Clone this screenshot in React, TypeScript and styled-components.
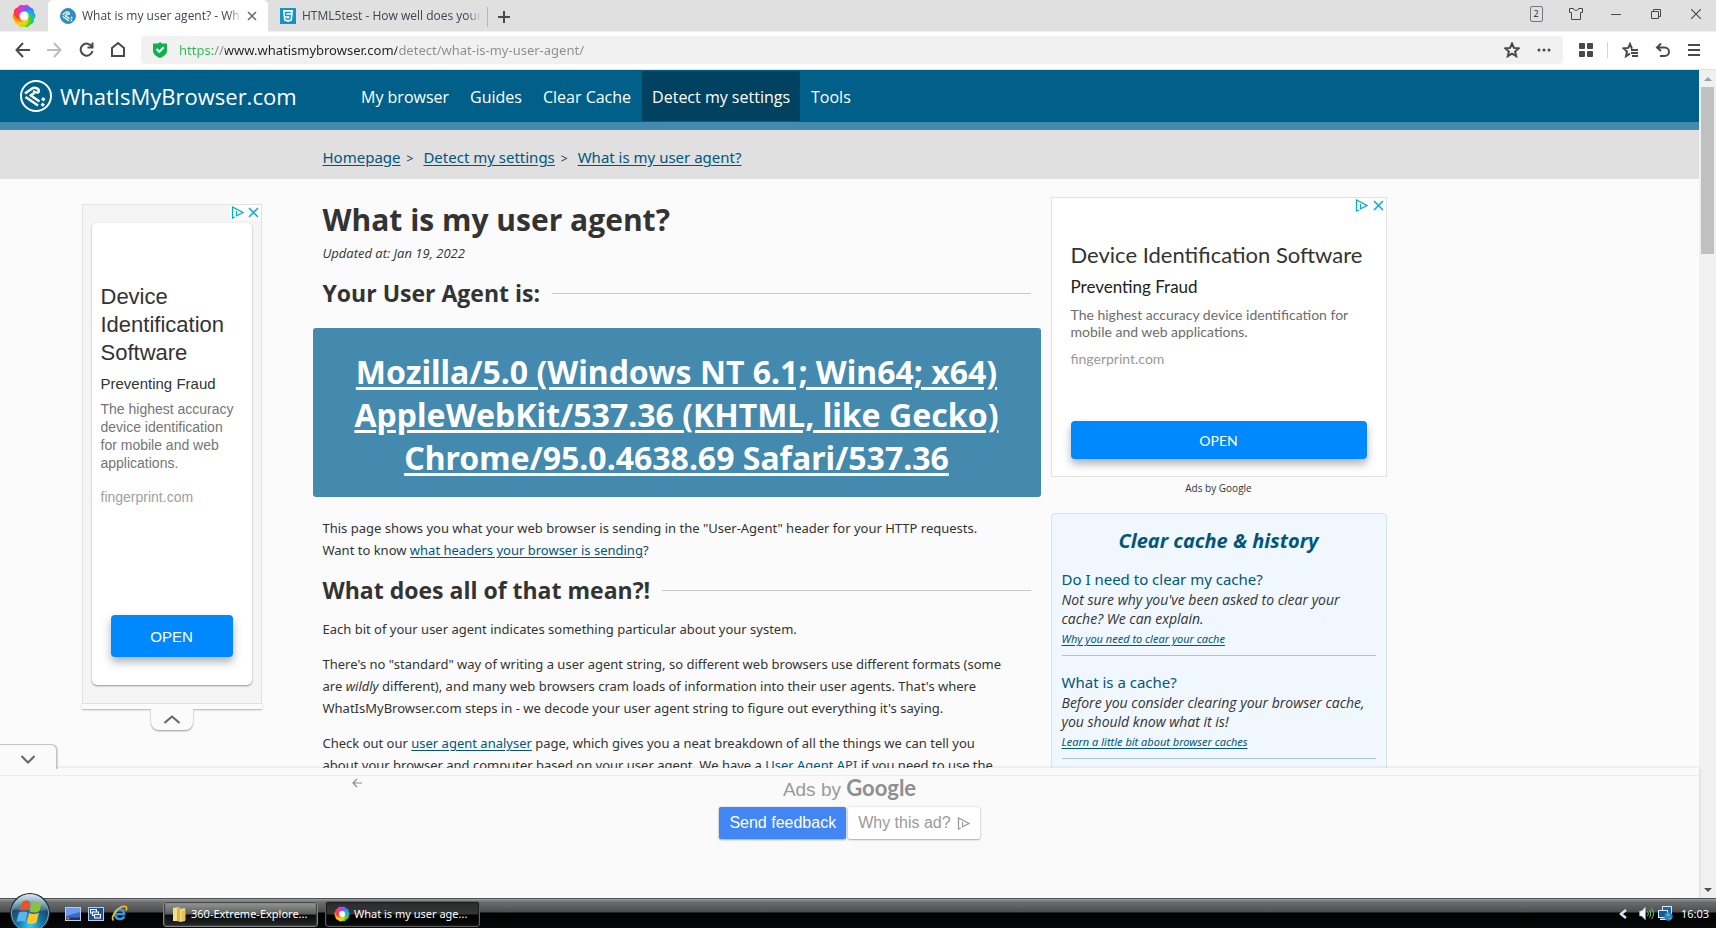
import React from "react";
import styled, { createGlobalStyle, css } from "styled-components";

const GlobalStyle = createGlobalStyle`
  * { box-sizing: border-box; }
  body { margin: 0; background: #fbfbfb; overflow: hidden; }
  button, input { font: inherit; margin: 0; }
  h1, h2, h3, p, ul, ol { margin: 0; padding: 0; }
  ul, ol { list-style: none; }
`;

const segoe = `"Segoe UI", "Open Sans", "Noto Sans", sans-serif`;
const segoeWide = `"Segoe UI", "Noto Sans", "Open Sans", sans-serif`;
const arial = `Arial, "Liberation Sans", sans-serif`;
const google = `"Google Sans", Lato, sans-serif`;

const Desktop = styled.div`
  height: 100vh;
  display: flex;
  flex-direction: column;
  font-family: ${segoe};
  font-size: 13px;
  color: #333;
`;

const IconButton = styled.button<{ $w?: number }>`
  width: ${(p) => p.$w ?? 32}px;
  height: 28px;
  padding: 0;
  border: 0;
  background: none;
  display: flex;
  align-items: center;
  justify-content: center;
  flex: none;
`;

/* ---------- browser chrome ---------- */

const TabStrip = styled.div`
  height: 32px;
  background: #e0e0e0;
  border-bottom: 1px solid #f0f0f0;
  display: flex;
  align-items: stretch;
  flex: none;
`;

const BrowserMark = styled.div`
  width: 48px;
  display: flex;
  align-items: center;
  padding-left: 12px;
`;

const Tab = styled.div<{ $active?: boolean }>`
  width: 220px;
  display: flex;
  align-items: center;
  gap: 6px;
  padding: 0 7px 0 12px;
  background: ${(p) => (p.$active ? "#fff" : "transparent")};
  border-radius: 5px 5px 0 0;
  margin-bottom: -1px;
  svg { flex: none; }
  button { margin-left: -5px; }
`;

const TabTitle = styled.span`
  flex: 1;
  overflow: hidden;
  white-space: nowrap;
  font-size: 12px;
  line-height: 16px;
  color: #3f4456;
  mask-image: linear-gradient(to right, #000 calc(100% - 14px), transparent);
`;

const NewTab = styled.div`
  height: 20px;
  margin: 7px 0 0 -1px;
  border-left: 1px solid #b8b8b8;
  display: flex;
  align-items: center;
`;

const WindowControls = styled.div`
  margin-left: auto;
  display: flex;
  align-items: center;
  height: 28px;
`;

const TabCount = styled.span`
  width: 13px;
  height: 16px;
  border: 1px solid #777;
  border-radius: 2px;
  font-size: 9px;
  line-height: 14px;
  text-align: center;
  color: #222;
`;

const Toolbar = styled.div`
  height: 38px;
  background: #fff;
  border-bottom: 1px solid #e0e0e0;
  display: flex;
  align-items: center;
  padding: 0 6px 2px;
  flex: none;
`;

const AddressBar = styled.label`
  flex: 1;
  height: 28px;
  margin: 0 7px 0 7px;
  border-radius: 4px;
  background: #f1f1f1;
  display: flex;
  align-items: center;
  padding: 0 3px 0 12px;
  svg { flex: none; }
`;

const AddressInput = styled.input`
  flex: 1;
  min-width: 0;
  height: 24px;
  margin-left: 12px;
  padding: 0;
  border: 0;
  outline: 0;
  font-family: ${segoeWide};
  font-size: 13px;
  color: transparent;
  background: linear-gradient(
    to right,
    #2dbb55 34px, #8c8c8c 34px, #8c8c8c 46px,
    #222 46px, #222 218px, #8c8c8c 218px
  );
  background-clip: text;
`;

const ToolbarDivider = styled.span`
  width: 1px;
  height: 16px;
  background: #d4d4d4;
  margin: 0 6px 0 5px;
`;

/* ---------- page ---------- */

const Viewport = styled.div`
  flex: 1;
  min-height: 0;
  display: flex;
`;

const PageColumn = styled.div`
  flex: 1;
  min-width: 0;
  display: flex;
  flex-direction: column;
`;

const Page = styled.div`
  flex: 1;
  min-height: 0;
  overflow: hidden;
  background: #fbfbfb;
`;

const ScrollTrack = styled.div`
  width: 17px;
  background: #f0f0f0;
  display: flex;
  flex-direction: column;
  align-items: center;
  justify-content: space-between;
`;

const ScrollTop = styled.div`
  display: flex;
  flex-direction: column;
  align-items: center;
`;

const ScrollArrow = styled.div`
  height: 17px;
  display: flex;
  align-items: center;
`;

const ScrollThumb = styled.div`
  width: 13px;
  height: 167px;
  background: #c0c0c0;
`;

const SiteHeader = styled.header`
  height: 60px;
  background: #00608a;
  border-bottom: 8px solid #438aae;
  display: flex;
  align-items: stretch;
  padding-left: 20px;
`;

const SiteBrand = styled.a`
  width: 331px;
  display: flex;
  align-items: center;
  gap: 8px;
  color: #fff;
  font-size: 22px;
  line-height: 30px;
  text-decoration: none;
`;

const SiteNav = styled.nav`
  display: flex;
  align-items: stretch;
  gap: 1px;
  padding: 1px 0;
`;

const NavLink = styled.a<{ $current?: boolean }>`
  padding: 2px 10px 0;
  display: flex;
  align-items: center;
  font-size: 16px;
  color: #fff;
  text-decoration: none;
  background: ${(p) => (p.$current ? "#00425f" : "transparent")};
`;

const Columns = styled.div`
  display: grid;
  grid-template-columns: minmax(240px, 1fr) minmax(0, 1074px) minmax(0, 1fr);
`;

const BreadcrumbBand = styled(Columns)`
  background: #e0e0e0;
`;

const Breadcrumbs = styled.ol`
  grid-column: 2;
  height: 49px;
  display: flex;
  align-items: center;
  padding: 5px 10px 0;
  font-family: ${segoeWide};
  font-size: 15px;
  li + li::before {
    content: ">";
    font-size: 12px;
    padding: 0 10px 0 6px;
  }
`;

const Link = styled.a`
  color: #00567c;
  text-decoration: underline;
  text-underline-offset: 2px;
`;

const Content = styled.div`
  display: flex;
  gap: 10px;
  min-width: 0;
`;

const Article = styled.main`
  flex: 1;
  min-width: 0;
  padding: 19px 10px 0;
`;

const PageTitle = styled.h1`
  font-size: 30px;
  line-height: 44px;
`;

const Updated = styled.p`
  font-size: 13px;
  line-height: 22px;
  font-style: italic;
  margin-bottom: 13px;
`;

const SectionTitle = styled.h2`
  display: flex;
  align-items: center;
  gap: 12px;
  font-size: 23px;
  line-height: 32px;
  white-space: nowrap;
  margin-bottom: 12px;
  &::after {
    content: "";
    flex: 1;
    height: 1px;
    background: #c8c8c8;
  }
`;

const AgentBox = styled.div`
  margin: 19px -10px 20px;
  padding: 22px 20px 18px;
  border-radius: 3px;
  background: #438aae;
  text-align: center;
  font-family: ${segoeWide};
  font-size: 32px;
  font-weight: 700;
  line-height: 43px;
  a {
    color: #fff;
    text-decoration-thickness: 3px;
    text-underline-offset: 3px;
  }
`;

const Paragraph = styled.p`
  font-family: ${segoeWide};
  font-size: 13px;
  line-height: 22px;
  margin-bottom: 13px;
`;

const Sidebar = styled.aside`
  width: 336px;
  flex: none;
  padding-top: 18px;
`;

/* ---------- ads ---------- */

const AdChoices = styled.div<{ $boxed?: boolean }>`
  display: flex;
  justify-content: flex-end;
  gap: ${(p) => (p.$boxed ? 1 : 2)}px;
  height: 18px;
`;

const AdChoice = styled.button<{ $boxed?: boolean }>`
  width: 15px;
  height: 15px;
  padding: 0;
  border: 0;
  background: ${(p) => (p.$boxed ? "#fff" : "none")};
  display: flex;
  align-items: center;
  justify-content: center;
`;

const OpenButton = styled.button<{ $tall?: boolean }>`
  display: block;
  border: 0;
  border-radius: 4px;
  background: #0088ff;
  color: #fff;
  box-shadow: 0 5px 9px rgba(40, 50, 80, 0.38);
  ${(p) =>
    p.$tall
      ? css`
          margin: auto 10px 28px;
          height: 42px;
          font-size: 15px;
        `
      : css`
          margin: auto 19px 17px;
          height: 38px;
          font-size: 14px;
        `}
`;

const SideAd = styled.section`
  height: 280px;
  border: 1px solid #e2e2e2;
  background: #fff;
  font-family: ${google};
  display: flex;
  flex-direction: column;
`;

const SideAdText = styled.div`
  padding: 25px 19px 0;
`;

const AdHeading = styled.h3`
  font-weight: 400;
  font-size: 22px;
  line-height: 28px;
`;

const AdSub = styled.p`
  margin-top: 6px;
  font-size: 17px;
  line-height: 24px;
  color: #222;
`;

const AdBody = styled.p`
  margin-top: 7px;
  font-size: 14px;
  line-height: 17px;
  color: #6c6c6c;
`;

const AdSite = styled.p`
  margin-top: 10px;
  font-size: 14px;
  line-height: 17px;
  color: #999;
`;

const AdCaption = styled.p`
  height: 36px;
  padding-top: 3px;
  text-align: center;
  font-size: 10px;
  line-height: 16px;
`;

const TowerSlot = styled.div`
  display: flex;
  flex-direction: column;
  align-items: flex-end;
  padding: 25px 51px 0 0;
`;

const Tower = styled.section`
  width: 180px;
  height: 500px;
  border: 1px solid #e3e3e3;
  background: #f5f5f5;
  font-family: ${arial};
  display: flex;
  flex-direction: column;
  padding: 0 9px 18px;
  ${AdChoices} { margin-right: -9px; }
`;

const TowerCard = styled.div`
  flex: 1;
  display: flex;
  flex-direction: column;
  background: #fff;
  border-radius: 5px;
  box-shadow: 0 1px 2px rgba(0, 0, 0, 0.4);
  padding: 60px 9px 0;
`;

const TowerHeading = styled.h3`
  font-weight: 400;
  font-size: 22px;
  line-height: 28px;
`;

const TowerSub = styled.p`
  margin-top: 7px;
  font-size: 15px;
  line-height: 20px;
`;

const TowerBody = styled.p`
  margin-top: 6px;
  font-size: 14px;
  line-height: 18px;
  color: #757575;
  white-space: nowrap;
`;

const TowerSite = styled.p`
  margin-top: 16px;
  font-size: 14px;
  line-height: 18px;
  color: #a0a0a0;
`;

const TowerFoot = styled.div`
  width: 180px;
  display: flex;
  flex-direction: column;
  align-items: center;
`;

const TowerStrip = styled.div`
  width: 100%;
  height: 5px;
  background: #fbfbfb;
  box-shadow: 0 1px 2px rgba(0, 0, 0, 0.3);
`;

const TowerToggle = styled.button`
  position: relative;
  width: 42px;
  height: 21px;
  padding: 0;
  border: 0;
  border-radius: 0 0 8px 8px;
  background: #fbfbfb;
  box-shadow: 0 1px 2px rgba(0, 0, 0, 0.4);
  clip-path: inset(0 -4px -4px -4px);
  display: flex;
  align-items: center;
  justify-content: center;
`;

/* ---------- sidebar card ---------- */

const HelpCard = styled.section`
  border: 1px solid #d5e4ed;
  border-radius: 4px;
  background: #f0f7fe;
  padding: 12px 10px;
`;

const HelpTitle = styled.h2`
  text-align: center;
  font-size: 20px;
  line-height: 30px;
  font-style: italic;
  color: #00567c;
  margin-bottom: 12px;
`;

const HelpItem = styled.li`
  height: 88px;
  margin-bottom: 15px;
  border-bottom: 1px solid #a9c6d6;
  font-style: italic;
  font-size: 14px;
  line-height: 19px;
`;

const HelpHeading = styled.h3`
  font-family: ${segoeWide};
  font-weight: 400;
  font-style: normal;
  font-size: 15px;
  line-height: 22px;
  color: #00567c;
`;

const HelpMore = styled(Link)`
  display: block;
  font-family: ${segoeWide};
  font-size: 11px;
  line-height: 22px;
`;

/* ---------- bottom ad ---------- */

const AnchorAd = styled.section`
  position: relative;
  height: 130px;
  flex: none;
  background: #fafafa;
  box-shadow: 0 0 3px rgba(0, 0, 0, 0.16);
  font-family: ${arial};
  display: flex;
  flex-direction: column;
  align-items: center;
  &::before {
    content: "";
    width: 100%;
    height: 7px;
    border-bottom: 1px solid #ececec;
  }
`;

const AnchorToggle = styled.button`
  position: absolute;
  left: 0;
  top: -24px;
  width: 57px;
  height: 25px;
  padding: 4px 0 0;
  border: 1px solid #c4c4c4;
  border-width: 1px 1px 0 0;
  border-radius: 0 6px 0 0;
  background: #fafafa;
  box-shadow: 1px 0 1px rgba(0, 0, 0, 0.15);
  display: flex;
  align-items: center;
  justify-content: center;
`;

const AnchorBack = styled.button`
  position: absolute;
  left: 350px;
  top: 8px;
  width: 14px;
  height: 14px;
  padding: 0;
  border: 0;
  background: none;
  display: flex;
  align-items: center;
  justify-content: center;
`;

const AdsBy = styled.p`
  font-size: 19px;
  line-height: 28px;
  color: #9a9a9a;
  b {
    font-family: ${google};
    font-weight: 700;
    font-size: 22px;
    line-height: 20px;
    color: #8f8f8f;
  }
`;

const AnchorActions = styled.div`
  display: flex;
  gap: 2px;
  margin-top: 3px;
`;

const AnchorButton = styled.button<{ $primary?: boolean }>`
  height: 32px;
  padding: 0 10px;
  border: 0;
  border-radius: 2px;
  font-size: 16px;
  background: ${(p) => (p.$primary ? "#4285f4" : "#fff")};
  color: ${(p) => (p.$primary ? "#fff" : "#9a9a9a")};
  box-shadow: 0 0 2px rgba(0, 0, 0, 0.2), 0 1px 2px rgba(0, 0, 0, 0.28);
  display: flex;
  align-items: center;
  gap: 6px;
`;

/* ---------- taskbar ---------- */

const Taskbar = styled.footer`
  position: relative;
  height: 30px;
  flex: none;
  border-top: 1px solid #4d5256;
  background: linear-gradient(#9b9d9e 0, #6b6d6e 3px, #4b4d4e 13px, #000 14px, #07090a 100%);
  display: flex;
  align-items: center;
  color: #fff;
`;

const StartButton = styled.button`
  align-self: flex-end;
  width: 42px;
  height: 35px;
  margin-left: 9px;
  padding: 0;
  border: 0;
  background: none;
  display: flex;
`;

const QuickLaunch = styled.div`
  width: 112px;
  display: flex;
  align-items: center;
  gap: 7px;
  padding-left: 14px;
`;

const TaskButton = styled.button<{ $pressed?: boolean }>`
  width: 155px;
  height: 26px;
  margin-right: 7px;
  padding: 0 8px;
  border: 1px solid ${(p) => (p.$pressed ? "#5c5e5f" : "#828484")};
  border-radius: 3px;
  box-shadow: inset 0 0 1px 1px ${(p) => (p.$pressed ? "#1a1a1a" : "#3d4040")};
  background: ${(p) =>
    p.$pressed
      ? "linear-gradient(#2b2d2c 0, #343635 12px, #000 13px, #0b0c0c 100%)"
      : "linear-gradient(#999b99 0, #5c5e5d 12px, #0a0b0b 13px, #262827 100%)"};
  color: #fff;
  font-family: ${segoeWide};
  font-size: 11px;
  display: flex;
  align-items: center;
  gap: 4px;
  white-space: nowrap;
  svg { flex: none; }
`;

const Tray = styled.div`
  margin-left: auto;
  padding-right: 7px;
  display: flex;
  align-items: center;
  gap: 4px;
  font-family: ${segoeWide};
  font-size: 11px;
  time { margin-left: 4px; }
`;

const TrayExpand = styled.button`
  width: 16px;
  height: 16px;
  padding: 0;
  border: 0;
  background: none;
  display: flex;
  align-items: center;
`;

/* ---------- drawings ---------- */

const ringColors = ["#c63cf0", "#5a6cf5", "#18a8f0", "#1fc98a", "#4fcb2a", "#c4dc1c", "#ffcf0a", "#ff8f14", "#f8402c", "#ff2f9a"];

const Pinwheel = ({ size }: { size: number }) => (
  <svg width={size} height={size} viewBox="0 0 24 24" aria-hidden="true">
    {ringColors.map((c, i) => (
      <path key={c} d="M8.500 10C8 4.500 13 0.500 18.500 2.500C21 4.500 21 7 20 8.500C17.500 5.500 14 6 12.500 8.500Z" fill={c} transform={`rotate(${i * 36 - 20} 12 12)`} />
    ))}
    <path d="M8.500 10C8 4.500 11 1.500 14 1.200L14.500 6.500C13.500 7 13 7.700 12.500 8.500Z" fill={ringColors[0]} transform="rotate(-20 12 12)" />
    <circle cx="12" cy="12" r="4.600" fill="#fff" />
  </svg>
);

const SiteMark = ({ size, disc }: { size: number; disc?: boolean }) => (
  <svg width={size} height={size} viewBox="0 0 32 32" aria-hidden="true">
    <circle cx="16" cy="16" r="15" fill={disc ? "#2f8fc4" : "none"} stroke={disc ? "#2f8fc4" : "#fff"} strokeWidth="2" />
    <g fill="none" stroke="#fff" strokeWidth="2.500" strokeLinejoin="round">
      <path d="M5 13.500L12.500 8.200C15 6.800 20 9 18.500 12C17.500 13.500 15 12 13 11.200" />
      <path d="M14.500 13L10.500 15.300L19.500 21.500M5.500 17L18 25.500" />
      <path d="M22 18.300L24.600 20.200M21.500 23.800L24 25.600" strokeWidth="3" />
    </g>
  </svg>
);

const Html5Mark = () => (
  <svg width="16" height="16" viewBox="0 0 16 16" aria-hidden="true">
    <rect width="16" height="16" fill="#0e96c6" />
    <path d="M3 2H13L12 12.500L8 14L4 12.500Z" fill="#fff" />
    <path d="M10.800 4.500H5.500L5.700 7.500H10.200L9.900 10.700L8 11.400L6.100 10.700L6 9.500" fill="none" stroke="#0e96c6" strokeWidth="1.400" />
  </svg>
);

const Stroke = ({ d, w = 16, h = 16, color = "#4a4a4a", sw = 2 }: { d: string; w?: number; h?: number; color?: string; sw?: number }) => (
  <svg width={w} height={h} viewBox={`0 0 ${w} ${h}`} fill="none" stroke={color} strokeWidth={sw} aria-hidden="true">
    <path d={d} />
  </svg>
);

const Shield = () => (
  <svg width="14" height="16" viewBox="0 0 14 16" aria-hidden="true">
    <path d="M7 0L9 1.500H14V9C14 12.500 10.500 14.500 7 16C3.500 14.500 0 12.500 0 9V1.500H5Z" fill="#0fb14f" />
    <path d="M3.500 7L6.300 9.800L10.700 5.200" fill="none" stroke="#fff" strokeWidth="2" />
  </svg>
);

const AdTriangle = ({ color = "#00aecd" }: { color?: string }) => (
  <svg width="13" height="13" viewBox="0 0 13 13" fill="none" stroke={color} aria-hidden="true">
    <path d="M4 11L1.500 12V1L12 6.500L5.500 9.800V5" strokeWidth="1.300" />
  </svg>
);

const CloseX = () => <Stroke w={11} h={11} d="M1 1L10 10M10 1L1 10" color="#00aecd" sw={1.5} />;

const StartOrb = () => (
  <svg width="42" height="35" viewBox="0 0 42 35" aria-hidden="true">
    <defs>
      <radialGradient id="orb" cx="50%" cy="85%" r="75%">
        <stop offset="0" stopColor="#2fd0ff" />
        <stop offset="0.450" stopColor="#1273a8" />
        <stop offset="0.800" stopColor="#1b4763" />
        <stop offset="1" stopColor="#5d8299" />
      </radialGradient>
      <linearGradient id="gloss" x1="0" y1="0" x2="0" y2="1">
        <stop offset="0" stopColor="#e4f1f7" stopOpacity="0.900" />
        <stop offset="1" stopColor="#8fb4c6" stopOpacity="0.350" />
      </linearGradient>
    </defs>
    <circle cx="21" cy="20" r="20" fill="#1b2a33" />
    <circle cx="21" cy="20" r="18.500" fill="url(#orb)" stroke="#83a5b8" />
    <path d="M3.500 17C6 -4 36 -4 38.500 17C28 20 14 14 3.500 17Z" fill="url(#gloss)" />
    <path d="M13 9C16 7 18.500 7 21 8.500L19 18C16.500 16.500 14 16.500 10.500 18Z" fill="#e9532a" />
    <path d="M22.500 9C25.500 10.500 29 10.500 33 8.500L30.500 18C27 20 23.500 20 20.500 18.500Z" fill="#8cc23a" />
    <path d="M10 19.500C13.500 18 16 18 18.600 19.500L16.300 29C13.500 27.500 11 27.500 7.500 29Z" fill="#58b6ee" />
    <path d="M20 20C23 21.500 26.500 21.500 30 19.700L27.500 29.500C24 31.500 20.500 31.500 17.800 30Z" fill="#fbc62c" />
  </svg>
);

const DesktopIcon = () => (
  <svg width="16" height="14" viewBox="0 0 16 14" aria-hidden="true">
    <rect x="0.500" y="0.500" width="15" height="13" fill="#3768d6" stroke="#b9cbe8" />
    <path d="M1 1H15V5L1 9Z" fill="#6d9af0" />
    <rect x="1" y="10.500" width="14" height="2.500" fill="#26354a" />
    <rect x="1.500" y="10.500" width="3" height="2" fill="#e0703a" />
  </svg>
);

const SwitcherIcon = () => (
  <svg width="16" height="14" viewBox="0 0 16 14" aria-hidden="true">
    <rect x="0.500" y="0.500" width="15" height="13" fill="#1d4f94" stroke="#b9cbe8" />
    <g fill="#2a66b4" stroke="#fff">
      <rect x="2.500" y="2.500" width="6" height="3.500" />
      <rect x="4.500" y="5" width="6" height="3.500" />
      <rect x="6.500" y="7.500" width="6" height="3.500" />
    </g>
  </svg>
);

const ExplorerIcon = () => (
  <svg width="17" height="17" viewBox="0 0 17 17" fill="none" aria-hidden="true">
    <path d="M13.200 11.500C11.500 15 5 15.300 4 9.500C3.600 5 8 3.200 11 5C12.800 6.200 13.200 8 13 9.300H5.500" stroke="#2d9bea" strokeWidth="2.600" />
    <path d="M2.500 15.500C-1 12 8 0 14.500 1.500C16 2 15.800 4 15 5.500" stroke="#f5b92a" strokeWidth="1.700" />
  </svg>
);

const FolderIcon = () => (
  <svg width="15" height="16" viewBox="0 0 15 16" aria-hidden="true">
    <path d="M1 2L6 1V15H1Z" fill="#f4e08a" />
    <path d="M5 1.500L8 0.500V16L5 15Z" fill="#d8b64a" />
    <path d="M8 3L13 2V15L8 16Z" fill="#f3dc86" />
    <path d="M9.500 5L13.500 4V14L9.500 15Z" fill="#e2c35a" />
  </svg>
);

const SpeakerIcon = () => (
  <svg width="15" height="15" viewBox="0 0 15 15" fill="none" aria-hidden="true">
    <path d="M0.500 5V10H2.500L6.500 14V1L2.500 5Z" fill="#f2f4f6" stroke="#9aa3ab" strokeWidth="0.500" />
    <path d="M8.500 5.500C9.500 7 9.500 8.500 8.500 10M10.500 4C12 6 12 9.500 10.500 11.500M12.500 2.500C15 5.500 15 10 12.500 13" stroke="#7fd08a" />
  </svg>
);

const NetworkIcon = () => (
  <svg width="15" height="15" viewBox="0 0 15 15" aria-hidden="true">
    <rect x="4.500" y="0.500" width="9" height="7" fill="#1668b0" stroke="#d8e8f4" />
    <rect x="0.500" y="4.500" width="9" height="7" fill="#0f5c9e" stroke="#d8e8f4" />
    <rect x="2" y="12.500" width="6" height="1.500" fill="#d8e8f4" />
    <circle cx="10.500" cy="10.500" r="4.200" fill="#2a7de0" />
    <path d="M8 8.500C10 7 12 7.500 12 9.500C11 11 9 10 8 8.500ZM11 12C13 11 14 12 12.500 13.500Z" fill="#5fd05a" />
  </svg>
);

const starPath = "M8 1.500L9.900 5.900L14.700 6.300L11.100 9.500L12.200 14.200L8 11.700L3.800 14.200L4.900 9.500L1.300 6.300L6.100 5.900Z";

/* ---------- data ---------- */

const nav = ["My browser", "Guides", "Clear Cache", "Detect my settings", "Tools"];
const crumbs = ["Homepage", "Detect my settings", "What is my user agent?"];
const help = [
  { title: "Do I need to clear my cache?", text: "Not sure why you've been asked to clear your cache? We can explain.", more: "Why you need to clear your cache" },
  { title: "What is a cache?", text: "Before you consider clearing your browser cache, you should know what it is!", more: "Learn a little bit about browser caches" },
];

export default function App() {
  return (
    <Desktop>
      <GlobalStyle />
      <TabStrip>
        <BrowserMark><Pinwheel size={24} /></BrowserMark>
        <Tab $active>
          <SiteMark size={16} disc />
          <TabTitle>What is my user agent? - Wha</TabTitle>
          <IconButton $w={18} aria-label="Close tab"><Stroke w={10} h={10} d="M1 1L9 9M9 1L1 9" color="#666" sw={1.5} /></IconButton>
        </Tab>
        <Tab>
          <Html5Mark />
          <TabTitle>HTML5test - How well does your</TabTitle>
        </Tab>
        <NewTab>
          <IconButton aria-label="New tab"><Stroke w={12} h={12} d="M6 0V12M0 6H12" /></IconButton>
        </NewTab>
        <WindowControls>
          <IconButton $w={40} aria-label="Open tabs"><TabCount>2</TabCount></IconButton>
          <IconButton $w={40} aria-label="Skins"><Stroke w={14} h={12} d="M4.500 0.500H0.500V4.500H2.500V11.500H11.500V4.500H13.500V0.500H9.500C9.500 3 4.500 3 4.500 0.500Z" sw={1} /></IconButton>
          <IconButton $w={40} aria-label="Minimize"><Stroke w={10} h={10} d="M0 5.500H10" sw={1} /></IconButton>
          <IconButton $w={40} aria-label="Restore"><Stroke w={10} h={10} d="M0.500 2.500H7.500V9.500H0.500ZM2.500 2.500V0.500H9.500V7.500H7.500" sw={1} /></IconButton>
          <IconButton $w={40} aria-label="Close"><Stroke w={10} h={10} d="M0 0L10 10M10 0L0 10" sw={1.2} /></IconButton>
        </WindowControls>
      </TabStrip>

      <Toolbar>
        <IconButton aria-label="Back"><Stroke w={15} h={16} d="M15 8H2M8 1L1.500 8L8 15" /></IconButton>
        <IconButton aria-label="Forward"><Stroke w={15} h={16} d="M0 8H13M7 1L13.500 8L7 15" color="#bdbdbd" /></IconButton>
        <IconButton aria-label="Reload"><Stroke w={15} h={15} d="M12.800 4.500A6 6 0 1 0 13.500 9M13.500 0.500V5.500H8.500" /></IconButton>
        <IconButton aria-label="Home"><Stroke w={14} h={15} d="M1 6L7 1L13 6V14H1Z" /></IconButton>
        <AddressBar>
          <Shield />
          <AddressInput aria-label="Address" defaultValue="https://www.whatismybrowser.com/detect/what-is-my-user-agent/" />
          <IconButton aria-label="Bookmark"><Stroke d={starPath} /></IconButton>
          <IconButton aria-label="More">
            <svg width="14" height="4" fill="#4a4a4a"><circle cx="2" cy="2" r="1.500" /><circle cx="7" cy="2" r="1.500" /><circle cx="12" cy="2" r="1.500" /></svg>
          </IconButton>
        </AddressBar>
        <IconButton aria-label="Apps">
          <svg width="14" height="14" fill="#4a4a4a"><rect width="6" height="6" rx="1" /><rect x="8" width="6" height="6" rx="1" /><rect y="8" width="6" height="6" rx="1" /><rect x="8" y="8" width="6" height="6" rx="1" /></svg>
        </IconButton>
        <ToolbarDivider />
        <IconButton aria-label="Favorites"><Stroke w={17} d="M10.500 6.200L9.500 5.900L8 2L6.200 5.900L1.500 6.300L5 9.500L4 14.200L8 11.700M9 8H16M9 11H16M10 14H16" /></IconButton>
        <IconButton aria-label="Undo"><Stroke w={15} h={14} d="M5 13H9.500C15.500 13 15.500 4.500 9.500 4.500H2M6 0.500L2 4.500L6 8" /></IconButton>
        <IconButton aria-label="Menu"><Stroke w={12} h={14} d="M0 2H12M0 7H12M0 12H12" /></IconButton>
      </Toolbar>

      <Viewport>
        <PageColumn>
          <Page>
            <SiteHeader>
              <SiteBrand href="#"><SiteMark size={32} />WhatIsMyBrowser.com</SiteBrand>
              <SiteNav>
                {nav.map((item, i) => <NavLink key={item} href="#" $current={i === 3}>{item}</NavLink>)}
              </SiteNav>
            </SiteHeader>
            <BreadcrumbBand>
              <Breadcrumbs>
                {crumbs.map((c) => <li key={c}><Link href="#">{c}</Link></li>)}
              </Breadcrumbs>
            </BreadcrumbBand>

            <Columns>
              <TowerSlot>
                <Tower>
                  <AdChoices $boxed>
                    <AdChoice $boxed aria-label="AdChoices"><AdTriangle /></AdChoice>
                    <AdChoice $boxed aria-label="Close ad"><CloseX /></AdChoice>
                  </AdChoices>
                  <TowerCard>
                    <TowerHeading>Device Identification Software</TowerHeading>
                    <TowerSub>Preventing Fraud</TowerSub>
                    <TowerBody>The highest accuracy<br />device identification<br />for mobile and web<br />applications.</TowerBody>
                    <TowerSite>fingerprint.com</TowerSite>
                    <OpenButton $tall>OPEN</OpenButton>
                  </TowerCard>
                </Tower>
                <TowerFoot>
                  <TowerStrip />
                  <TowerToggle aria-label="Collapse ad"><Stroke w={16} h={9} d="M0.500 8L8 1.500L15.500 8" color="#666" /></TowerToggle>
                </TowerFoot>
              </TowerSlot>

              <Content>
                <Article>
                  <PageTitle>What is my user agent?</PageTitle>
                  <Updated>Updated at: Jan 19, 2022</Updated>
                  <SectionTitle>Your User Agent is:</SectionTitle>
                  <AgentBox>
                    <a href="#">Mozilla/5.0 (Windows NT 6.1; Win64; x64) AppleWebKit/537.36 (KHTML, like Gecko) Chrome/95.0.4638.69 Safari/537.36</a>
                  </AgentBox>
                  <Paragraph>
                    This page shows you what your web browser is sending in the "User-Agent" header for your HTTP requests.<br />
                    Want to know <Link href="#">what headers your browser is sending</Link>?
                  </Paragraph>
                  <SectionTitle>What does all of that mean?!</SectionTitle>
                  <Paragraph>Each bit of your user agent indicates something particular about your system.</Paragraph>
                  <Paragraph>
                    There's no "standard" way of writing a user agent string, so different web browsers use different formats (some<br />
                    are <em>wildly</em> different), and many web browsers cram loads of information into their user agents. That's where<br />
                    WhatIsMyBrowser.com steps in - we decode your user agent string to figure out everything it's saying.
                  </Paragraph>
                  <Paragraph>
                    Check out our <Link href="#">user agent analyser</Link> page, which gives you a neat breakdown of all the things we can tell you<br />
                    about your browser and computer based on your user agent. We have a <Link href="#">User Agent API</Link> if you need to use the
                  </Paragraph>
                </Article>

                <Sidebar>
                  <SideAd>
                    <AdChoices>
                      <AdChoice aria-label="AdChoices"><AdTriangle /></AdChoice>
                      <AdChoice aria-label="Close ad"><CloseX /></AdChoice>
                    </AdChoices>
                    <SideAdText>
                      <AdHeading>Device Identification Software</AdHeading>
                      <AdSub>Preventing Fraud</AdSub>
                      <AdBody>The highest accuracy device identification for mobile and web applications.</AdBody>
                      <AdSite>fingerprint.com</AdSite>
                    </SideAdText>
                    <OpenButton>OPEN</OpenButton>
                  </SideAd>
                  <AdCaption>Ads by Google</AdCaption>
                  <HelpCard>
                    <HelpTitle>Clear cache &amp; history</HelpTitle>
                    <ul>
                      {help.map((h) => (
                        <HelpItem key={h.title}>
                          <HelpHeading>{h.title}</HelpHeading>
                          <p>{h.text}</p>
                          <HelpMore href="#">{h.more}</HelpMore>
                        </HelpItem>
                      ))}
                    </ul>
                  </HelpCard>
                </Sidebar>
              </Content>
            </Columns>
          </Page>

          <AnchorAd>
            <AnchorToggle aria-label="Hide ad"><Stroke w={14} h={9} d="M0.500 1L7 7.500L13.500 1" color="#666" /></AnchorToggle>
            <AnchorBack aria-label="Back to ad"><Stroke w={10} h={10} d="M10 5H1.500M5 1L1 5L5 9" color="#8a8a8a" sw={1.2} /></AnchorBack>
            <AdsBy>Ads by <b>Google</b></AdsBy>
            <AnchorActions>
              <AnchorButton $primary>Send feedback</AnchorButton>
              <AnchorButton>Why this ad? <AdTriangle color="#9a9a9a" /></AnchorButton>
            </AnchorActions>
          </AnchorAd>
        </PageColumn>

        <ScrollTrack>
          <ScrollTop>
            <ScrollArrow><svg width="8" height="4"><path d="M0 4L4 0L8 4Z" fill="#a0a0a0" /></svg></ScrollArrow>
            <ScrollThumb />
          </ScrollTop>
          <ScrollArrow><svg width="8" height="4"><path d="M0 0L4 4L8 0Z" fill="#505050" /></svg></ScrollArrow>
        </ScrollTrack>
      </Viewport>

      <Taskbar>
        <StartButton aria-label="Start"><StartOrb /></StartButton>
        <QuickLaunch><DesktopIcon /><SwitcherIcon /><ExplorerIcon /></QuickLaunch>
        <TaskButton><FolderIcon />360-Extreme-Explore...</TaskButton>
        <TaskButton $pressed><Pinwheel size={16} />What is my user age...</TaskButton>
        <Tray>
          <TrayExpand aria-label="Show hidden icons"><Stroke w={8} h={10} d="M7 1L2 5L7 9" color="#dfe3ea" sw={2.5} /></TrayExpand>
          <SpeakerIcon />
          <NetworkIcon />
          <time>16:03</time>
        </Tray>
      </Taskbar>
    </Desktop>
  );
}
